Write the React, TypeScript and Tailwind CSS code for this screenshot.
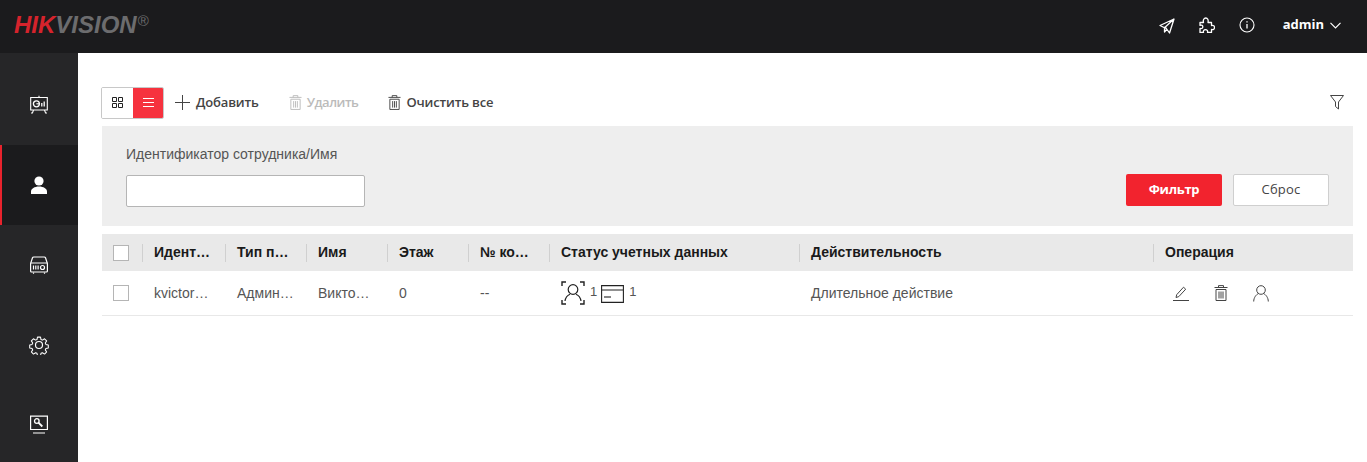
import React from "react";

const Presentation = () => (
  <svg width="20" height="20" viewBox="0 0 20 20" fill="none" stroke="white" strokeWidth="1.1">
    <path d="M1.700 2.500h16.600v12.500H1.700z" />
    <path d="M10 .8v1.700M4.500 15l-1.200 3.400M15.500 15l1.200 3.400M2 18h1.800M16.200 18H18" />
    <circle cx="7.400" cy="8.800" r="3" strokeWidth="1.300" />
    <path d="M7.400 8.800h3" />
    <path d="M12.800 8v3.500M15.200 6.500v5" strokeWidth="1.300" />
  </svg>
);
const Person = () => (
  <svg width="16" height="18" viewBox="0 0 16 18" fill="white">
    <circle cx="8" cy="5" r="4.600" />
    <path d="M0 18v-2.500C0 12.500 3.500 10.400 8 10.400s8 2.100 8 5.100V18z" />
  </svg>
);
const Device = () => (
  <svg width="20" height="20" viewBox="0 0 20 20" fill="none" stroke="white" strokeWidth="1.200">
    <path d="M1.600 8.500v7.500a1 1 0 0 0 1 1h14.800a1 1 0 0 0 1-1V8.500L16.500 2.800q-.3-.8-1.200-.8H4.700q-.9 0-1.200.8z" />
    <path d="M1.600 8h16.800M4.500 10.500v4M6.800 10.500v4M9.100 10.500v4" />
    <circle cx="13.500" cy="12.500" r="2" />
    <path d="M4.500 17.500v1.200M15.500 17.500v1.200" />
  </svg>
);
const Gear = () => (
  <svg width="20" height="20" viewBox="0 0 24 24" fill="none" stroke="white" strokeWidth="1.400" strokeLinejoin="round">
    <path d="M10 1.500h4l.7 3.200 1.900.8 2.800-1.800 2.800 2.800-1.800 2.800.8 1.900 3.200.7v4l-3.200.7-.8 1.900 1.800 2.800-2.800 2.800-2.800-1.800-1.900.8-.7 3.200h-4l-.7-3.200-1.900-.8-2.800 1.800-2.800-2.800 1.800-2.800-.8-1.900-3.200-.7v-4l3.200-.7.8-1.900-1.800-2.800 2.800-2.800 2.800 1.800 1.900-.8z" transform="translate(1.200 1.200) scale(.9)" />
    <circle cx="12" cy="12" r="4.200" />
  </svg>
);
const Maintenance = () => (
  <svg width="20" height="20" viewBox="0 0 20 20" fill="none" stroke="white" strokeWidth="1.200">
    <path d="M1.600 1.200h16.800v13.300H1.600zM4 18h12" />
    <circle cx="7.800" cy="6" r="2.300" strokeWidth="1.300" />
    <path d="M9.500 7.700l3.800 3.800" strokeWidth="1.800" />
  </svg>
);
const SidebarItem = ({ active, children }: { active?: boolean; children: React.ReactNode }) => (
  <div className={active ? "h-20 shrink-0 flex items-center justify-center bg-[#1b1b1d] border-l-2 border-[#e9232d] pr-[2px]" : "h-20 shrink-0 flex items-center justify-center"}>
    {children}
  </div>
);
const Trash = ({ color = "#444", size = 14 }: { color?: string; size?: number }) => (
  <svg width={size} height={size + 2} viewBox="0 0 14 16" fill="none" stroke={color} strokeWidth="1">
    <path d="M.5 2.500h13M4.500 2.500V.6h5v1.900M2 4.500h10v11H2zM5 6.500v7M7 6.500v7M9 6.500v7" />
  </svg>
);
const Pencil = () => (
  <svg width="16" height="15" viewBox="0 0 16 15" fill="none" stroke="#444" strokeWidth="1">
    <path d="M0 14.500h16M3 11.500l.7-2.800L10.500 1.200l2.200 2-6.900 7.400z" />
  </svg>
);
const UserOutline = ({ w = 16, h = 17 }: { w?: number; h?: number }) => (
  <svg width={w} height={h} viewBox="0 0 16 17" fill="none" stroke="#444" strokeWidth="1">
    <circle cx="8" cy="5" r="4.300" />
    <path d="M.7 16.500c0-4 2.800-7.200 4.600-7.800M15.300 16.500c0-4-2.800-7.200-4.600-7.800" />
  </svg>
);
const FaceIcon = () => (
  <svg width="24" height="24" viewBox="0 0 24 24" fill="none" stroke="#222" strokeWidth="1.200">
    <path d="M1 5V1h4M19 1h4v4M1 19v4h4M23 19v4h-4" strokeWidth="1.400" />
    <circle cx="12" cy="8.500" r="4.800" />
    <path d="M4 20c.5-3.500 3-6 5-6.800M20 20c-.5-3.500-3-6-5-6.800" />
  </svg>
);
const CardIcon = () => (
  <svg width="23" height="18" viewBox="0 0 23 18" fill="none" stroke="#222" strokeWidth="1.100">
    <path d="M.6.600h21.800v16.800H.6zM.6 5h21.800" />
    <path d="M3 12h7" />
  </svg>
);

const cols = "grid grid-cols-[41px_83px_81px_81px_81px_81px_250px_354px_199px]";
const headers = ["Идент…", "Тип п…", "Имя", "Этаж", "№ ко…", "Статус учетных данных", "Действительность", "Операция"];
const cells = ["kvictor…", "Админ…", "Викто…", "0", "--"];

export default function App() {
  return (
    <div className="w-[1367px] h-[462px] overflow-hidden bg-white flex flex-col font-['Liberation_Sans',sans-serif]">
      <header className="h-[53px] shrink-0 bg-[#1b1b1d] flex items-center justify-between pl-[14px] pr-[26px]">
        <div className="flex items-start italic font-bold text-[24px] leading-none pb-[3px] font-['Liberation_Sans',sans-serif]">
          <span className="text-[#d5232c]">HIK</span>
          <span className="text-[#6c6c6e]">VISION</span>
          <span className="text-[#6c6c6e] not-italic font-normal text-[15px] ml-[1px]">®</span>
        </div>
        <div className="flex items-center text-white pb-[3px]">
          <svg width="16" height="16" viewBox="0 0 16 16" fill="none" stroke="white" strokeWidth="1.300" strokeLinejoin="round" className="mr-[24px] mt-[1px]">
            <path d="M15 1L1 7.500l4 2 2 .5 3.500 5zM15 1L5.500 9.800v4.200l2.500-3" />
          </svg>
          <svg width="16" height="16" viewBox="0 0 16 16" fill="none" stroke="white" strokeWidth="1.300" strokeLinejoin="round" className="mr-[24px]">
            <path d="M1 5.500h3.500C3.800 3 5 1 6.800 1S9.600 3 9 5.500h3.500v3c2-.5 3 .5 3 2s-1 2.500-3 2v3h-4c.5-2-.5-2.800-2-2.800s-2.500.8-2 2.800H1v-4c2 .5 2.800-.5 2.800-1.800S3 7.800 1 8.300z" />
          </svg>
          <svg width="16" height="16" viewBox="0 0 16 16" fill="none" stroke="white" strokeWidth="1.100" className="mr-[28px]">
            <circle cx="8" cy="8" r="7" />
            <path d="M8 7v4.500M8 4.200v1.300" strokeWidth="1.300" />
          </svg>
          <span className="text-[13px] font-bold font-['Open_Sans',sans-serif] mr-[6px]">admin</span>
          <svg width="11" height="7" viewBox="0 0 11 7" fill="none" stroke="white" strokeWidth="1.200"><path d="M.5.800l5 5 5-5" /></svg>
        </div>
      </header>
      <div className="flex flex-1 min-h-0">
        <aside className="w-[78px] shrink-0 bg-[#262628] pt-3 flex flex-col">
          <SidebarItem><Presentation /></SidebarItem>
          <SidebarItem active><Person /></SidebarItem>
          <SidebarItem><Device /></SidebarItem>
          <SidebarItem><Gear /></SidebarItem>
          <SidebarItem><Maintenance /></SidebarItem>
        </aside>
        <main className="flex-1 pl-[24px] pr-[14px] pt-[33px] min-w-0">
          <div className="h-[33px] flex items-center font-['Open_Sans',sans-serif] text-[13px] font-semibold tracking-[-0.15px] text-[#444]">
            <div className="flex h-[32px] w-[63px] -ml-px rounded-[2px] border border-[#c8c8c8] overflow-hidden">
              <div className="w-[31px] flex items-center justify-center bg-white">
                <svg width="11" height="11" viewBox="0 0 11 11" fill="none" stroke="#222" strokeWidth="1"><path d="M.5.500h4v4h-4zM6.500.500h4v4h-4zM.5 6.500h4v4h-4zM6.500 6.500h4v4h-4z" /></svg>
              </div>
              <div className="flex-1 flex items-center justify-center bg-[#f6323e]">
                <svg width="11" height="9" viewBox="0 0 11 9" fill="none" stroke="white" strokeWidth="1"><path d="M0 .5h11M0 4.500h11M0 8.500h11" /></svg>
              </div>
            </div>
            <svg width="15" height="15" viewBox="0 0 15 15" fill="none" stroke="#444" strokeWidth="1" className="ml-[11px] mr-[6px]"><path d="M7.500 0v15M0 7.500h15" /></svg>
            <span>Добавить</span>
            <span className="ml-[30px] mr-[5px] flex"><Trash color="#bbb" size={13} /></span>
            <span className="text-[#bbb] tracking-[-0.5px]">Удалить</span>
            <span className="ml-[30px] mr-[5px] flex"><Trash size={13} /></span>
            <span>Очистить все</span>
            <svg width="14" height="15" viewBox="0 0 14 15" fill="none" stroke="#444" strokeWidth="1" className="ml-auto mr-[9px]"><path d="M.5.500h13L8.500 7v7l-3-2.500V7z" /></svg>
          </div>
          <section className="mt-[7px] h-[100px] bg-[#eeeeee] pl-6 pr-6 pt-[20px] flex justify-between">
            <div>
              <div className="text-[14px] leading-4 text-[#555]">Идентификатор сотрудника/Имя</div>
              <input className="mt-[13px] block w-[239px] h-[32px] bg-white border border-[#b5b5b5] rounded-[2px]" />
            </div>
            <div className="flex gap-[11px] items-start pt-[28px] font-['Open_Sans',sans-serif] text-[13px]">
              <button className="w-[96px] h-[32px] bg-[#f2232e] rounded-[2px] text-white font-bold tracking-[-0.3px]">Фильтр</button>
              <button className="w-[96px] h-[32px] bg-white border border-[#cfcfcf] rounded-[2px] text-[#444] font-medium tracking-[0.2px]">Сброс</button>
            </div>
          </section>
          <div className={`${cols} mt-2 h-[37px] bg-[#e9e9e9] items-center text-[14px] font-bold text-[#1a1a1a]`}>
            <div className="h-[18px] flex items-center pl-[11px] border-r border-[#d0d0d0]">
              <span className="block w-[16px] h-[16px] bg-white border border-[#b5b5b5]" />
            </div>
            {headers.map((h, i) => (
              <div key={h} className={i === headers.length - 1 ? "pl-[11px] h-[18px] leading-[16px] whitespace-nowrap" : "pl-[11px] h-[18px] leading-[16px] whitespace-nowrap border-r border-[#d0d0d0]"}>{h}</div>
            ))}
          </div>
          <div className={`${cols} h-[45px] items-center text-[14px] text-[#555] border-b border-[#e8e8e8]`}>
            <div className="pl-[11px]"><span className="block w-[16px] h-[16px] bg-white border border-[#b5b5b5]" /></div>
            {cells.map((c) => (<div key={c} className="pl-[11px] whitespace-nowrap">{c}</div>))}
            <div className="pl-[11px] flex items-start text-[13px] leading-4">
              <FaceIcon />
              <span className="ml-[5px] mr-[4px] mt-[3px]">1</span>
              <span className="mt-[4px] flex"><CardIcon /></span>
              <span className="ml-[5px] mt-[3px]">1</span>
            </div>
            <div className="pl-[11px] whitespace-nowrap">Длительное действие</div>
            <div className="pl-[19px] flex items-center gap-[25px]">
              <Pencil />
              <Trash size={14} />
              <UserOutline />
            </div>
          </div>
        </main>
      </div>
    </div>
  );
}
